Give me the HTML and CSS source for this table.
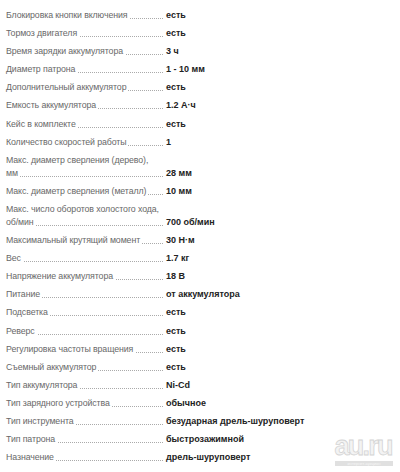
FILE: index.html
```html
<!DOCTYPE html>
<html lang="ru">
<head>
<meta charset="utf-8">
<link rel="stylesheet" href="styles.css">
</head>
<body>
<div class="specs">
  <div class="row"><div class="label"><span>Блокировка кнопки включения</span></div><div class="value">есть</div></div>
  <div class="row"><div class="label"><span>Тормоз двигателя</span></div><div class="value">есть</div></div>
  <div class="row"><div class="label"><span>Время зарядки аккумулятора</span></div><div class="value">3 ч</div></div>
  <div class="row"><div class="label"><span>Диаметр патрона</span></div><div class="value">1 - 10 мм</div></div>
  <div class="row"><div class="label"><span>Дополнительный аккумулятор</span></div><div class="value">есть</div></div>
  <div class="row"><div class="label"><span>Емкость аккумулятора</span></div><div class="value">1.2 А·ч</div></div>
  <div class="row"><div class="label"><span>Кейс в комплекте</span></div><div class="value">есть</div></div>
  <div class="row"><div class="label"><span>Количество скоростей работы</span></div><div class="value">1</div></div>
  <div class="row"><div class="label"><span>Макс. диаметр сверления (дерево), мм</span></div><div class="value">28 мм</div></div>
  <div class="row"><div class="label"><span>Макс. диаметр сверления (металл)</span></div><div class="value">10 мм</div></div>
  <div class="row"><div class="label"><span>Макс. число оборотов холостого хода, об/мин</span></div><div class="value">700 об/мин</div></div>
  <div class="row"><div class="label"><span>Максимальный крутящий момент</span></div><div class="value">30 Н·м</div></div>
  <div class="row"><div class="label"><span>Вес</span></div><div class="value">1.7 кг</div></div>
  <div class="row"><div class="label"><span>Напряжение аккумулятора</span></div><div class="value">18 В</div></div>
  <div class="row"><div class="label"><span>Питание</span></div><div class="value">от аккумулятора</div></div>
  <div class="row"><div class="label"><span>Подсветка</span></div><div class="value">есть</div></div>
  <div class="row"><div class="label"><span>Реверс</span></div><div class="value">есть</div></div>
  <div class="row"><div class="label"><span>Регулировка частоты вращения</span></div><div class="value">есть</div></div>
  <div class="row"><div class="label"><span>Съемный аккумулятор</span></div><div class="value">есть</div></div>
  <div class="row"><div class="label"><span>Тип аккумулятора</span></div><div class="value">Ni-Cd</div></div>
  <div class="row"><div class="label"><span>Тип зарядного устройства</span></div><div class="value">обычное</div></div>
  <div class="row"><div class="label"><span>Тип инструмента</span></div><div class="value">безударная дрель-шуруповерт</div></div>
  <div class="row"><div class="label"><span>Тип патрона</span></div><div class="value">быстрозажимной</div></div>
  <div class="row"><div class="label"><span>Назначение</span></div><div class="value">дрель-шуруповерт</div></div>
</div>
<div class="watermark">
  <div class="wm-logo">au.ru</div>
  <div class="wm-sub">интернет-аукцион</div>
</div>
</body>
</html>
```
FILE: styles.css
```css
html, body {
  margin: 0;
  padding: 0;
  background: #fff;
}
body {
  width: 400px;
  height: 472px;
  overflow: hidden;
  position: relative;
  font-family: "Liberation Sans", Arial, sans-serif;
  font-size: 9px;
}
.specs {
  padding: 9px 0 0 6px;
  display: flex;
  flex-direction: column;
  gap: 5.1px;
}
.row {
  display: grid;
  grid-template-columns: 157px 1fr;
  column-gap: 3px;
  line-height: 13px;
  align-items: end;
}
.label {
  color: #686868;
  font-size: 8.8px;
  letter-spacing: -0.1px;
  background-image: linear-gradient(to right, #aaa 1px, transparent 1px);
  background-size: 2px 1px;
  background-repeat: repeat-x;
  background-position: 0 calc(100% - 3px);
}
.label span {
  background: #fff;
  padding: 0 2px 4px 0;
}
.value {
  color: #222;
  font-weight: bold;
  white-space: nowrap;
}
.watermark {
  position: absolute;
  left: 333px;
  top: 434px;
  width: 62px;
  display: flex;
  flex-direction: column;
  align-items: center;
  gap: 3px;
}
.wm-logo {
  font-family: "Liberation Sans", Arial, sans-serif;
  font-weight: bold;
  font-size: 27px;
  line-height: 24px;
  color: #f3f3f3;
  -webkit-text-stroke: 0.8px #d4d4d4;
  letter-spacing: -1.8px;
  padding-right: 1.8px;
}
.wm-sub {
  width: 58px;
  height: 5px;
  background: #e0e0e0;
  color: #f6f6f6;
  font-size: 4px;
  line-height: 5px;
  text-align: center;
  overflow: hidden;
}
```
